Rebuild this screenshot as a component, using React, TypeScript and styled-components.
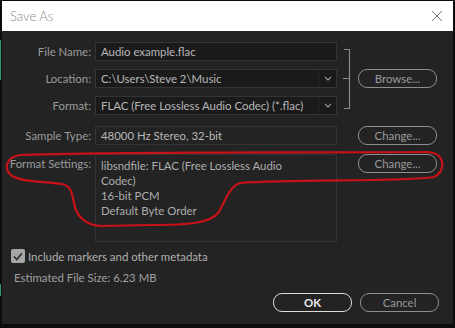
import styled, { createGlobalStyle } from 'styled-components';

const GlobalStyle = createGlobalStyle`
  html, body {
    margin: 0;
    padding: 0;
  }
  body {
    width: 455px;
    height: 328px;
    overflow: hidden;
    background: #0c0c0c;
    background-image: linear-gradient(
      to bottom,
      transparent 40px,
      #2f9a6c 40px,
      #2f9a6c 80px,
      transparent 80px,
      transparent 284px,
      #2f9a6c 284px,
      #2f9a6c 296px,
      transparent 296px
    );
    background-size: 1px 100%;
    background-repeat: no-repeat;
    font-family: "Lato", "Open Sans", sans-serif;
    position: relative;
  }
`;

const Window = styled.div`
  margin: 1px 2px 0 2px;
  width: 451px;
  display: flex;
  flex-direction: column;
`;

const TitleBar = styled.div`
  height: 30px;
  background: #ffffff;
  display: flex;
  align-items: center;
  justify-content: space-between;
  padding: 0 10px 0 8px;
`;

const Title = styled.span`
  font-family: "Lato", sans-serif;
  font-weight: 300;
  font-size: 13px;
  color: #8a8a8a;
`;

const CloseIcon = styled.svg`
  width: 12px;
  height: 12px;
`;

const Body = styled.div`
  height: 293px;
  background: #232323;
  display: flex;
  flex-direction: column;
  padding-top: 11px;
  box-sizing: border-box;
`;

const FieldGrid = styled.div<{ $rows: string; $gap: number; $top?: number }>`
  display: grid;
  grid-template-columns: 93px 242px 21px 79px;
  grid-template-rows: ${({ $rows }) => $rows};
  row-gap: ${({ $gap }) => $gap}px;
  margin-top: ${({ $top }) => $top ?? 0}px;
`;

const Label = styled.div`
  grid-column: 1;
  text-align: right;
  padding-right: 4px;
  font-size: 11.4px;
  color: #9b9b9b;
  line-height: 19px;
  white-space: nowrap;
  align-self: start;
`;

const Field = styled.div<{ $dark?: boolean }>`
  grid-column: 2;
  box-sizing: border-box;
  border: 1px solid #343434;
  background: ${({ $dark }) => ($dark ? '#1a1a1a' : '#232323')};
  display: flex;
  align-items: center;
  font-size: 11.4px;
  color: #b8b8b8;
  min-width: 0;
`;

const FieldText = styled.span`
  flex: 1;
  padding-left: 5px;
  white-space: nowrap;
  overflow: hidden;
`;

const MultiText = styled.div`
  padding: 3px 5px;
  font-size: 11.4px;
  line-height: 15px;
  color: #adadad;
`;

const ArrowCell = styled.div`
  width: 17px;
  align-self: stretch;
  border-left: 1px solid #262626;
  display: flex;
  align-items: center;
  justify-content: center;
`;

const Bracket = styled.svg`
  grid-column: 3;
  grid-row: 1 / span 3;
  width: 21px;
  height: 73px;
`;

const PillButton = styled.button<{ $bright?: boolean }>`
  grid-column: 4;
  box-sizing: border-box;
  height: 19px;
  width: 79px;
  border-radius: 9px;
  border: 1.5px solid ${({ $bright }) => ($bright ? '#dcdcdc' : '#8e8e8e')};
  background: transparent;
  color: ${({ $bright }) => ($bright ? '#ececec' : '#9a9a9a')};
  font-family: "Lato", sans-serif;
  font-size: 11.4px;
  font-weight: ${({ $bright }) => ($bright ? 700 : 400)};
  padding: 0;
  line-height: 15px;
  align-self: start;
`;

const CheckRow = styled.label`
  display: flex;
  align-items: center;
  gap: 3px;
  margin-top: 7px;
  padding-left: 9px;
  font-size: 11.4px;
  color: #b0b0b0;
  height: 14px;
`;

const CheckBox = styled.span`
  width: 14px;
  height: 14px;
  border-radius: 2px;
  background: #a6a6a6;
  display: flex;
  align-items: center;
  justify-content: center;
`;

const Estimate = styled.div`
  margin-top: 8px;
  padding-left: 12px;
  font-size: 11.4px;
  color: #a0a0a0;
  line-height: 14px;
`;

const Footer = styled.div`
  display: flex;
  justify-content: flex-end;
  gap: 8px;
  margin-top: 8px;
  padding-right: 14px;
`;

const Overlay = styled.svg`
  position: absolute;
  left: 0;
  top: 0;
  width: 455px;
  height: 328px;
  pointer-events: none;
`;

const Chevron = () => (
  <svg width="8" height="5" viewBox="0 0 8 5">
    <path d="M1 1 L4 4 L7 1" fill="none" stroke="#9a9a9a" strokeWidth="1.1" />
  </svg>
);

export default function App() {
  return (
    <>
      <GlobalStyle />
      <Window>
        <TitleBar>
          <Title>Save As</Title>
          <CloseIcon viewBox="0 0 12 12">
            <path d="M1 1 L11 11 M11 1 L1 11" stroke="#7a7a7a" strokeWidth="1" />
          </CloseIcon>
        </TitleBar>
        <Body>
          <FieldGrid $rows="19px 19px 19px" $gap={8}>
            <Label style={{ gridRow: 1 }}>File Name:</Label>
            <Field $dark style={{ gridRow: 1 }}>
              <FieldText>Audio example.flac</FieldText>
            </Field>
            <Label style={{ gridRow: 2 }}>Location:</Label>
            <Field $dark style={{ gridRow: 2 }}>
              <FieldText>C:\Users\Steve 2\Music</FieldText>
              <ArrowCell>
                <Chevron />
              </ArrowCell>
            </Field>
            <Label style={{ gridRow: 3 }}>Format:</Label>
            <Field $dark style={{ gridRow: 3 }}>
              <FieldText>FLAC (Free Lossless Audio Codec) (*.flac)</FieldText>
              <ArrowCell>
                <Chevron />
              </ArrowCell>
            </Field>
            <Bracket viewBox="0 0 21 73">
              <path
                d="M7 7.5 H12.5 V66.5 H7 M6 36.5 H12.5"
                fill="none"
                stroke="#8a8a8a"
                strokeWidth="1.2"
              />
            </Bracket>
            <PillButton style={{ gridRow: 2 }}>Browse...</PillButton>
          </FieldGrid>
          <FieldGrid $rows="19px 88px" $gap={9} $top={11}>
            <Label style={{ gridRow: 1 }}>Sample Type:</Label>
            <Field style={{ gridRow: 1 }}>
              <FieldText>48000 Hz Stereo, 32-bit</FieldText>
            </Field>
            <PillButton style={{ gridRow: 1 }}>Change...</PillButton>
            <Label style={{ gridRow: 2 }}>Format Settings:</Label>
            <Field style={{ gridRow: 2, alignItems: 'flex-start' }}>
              <MultiText>
                libsndfile: FLAC (Free Lossless Audio
                <br />
                Codec)
                <br />
                16-bit PCM
                <br />
                Default Byte Order
              </MultiText>
            </Field>
            <PillButton style={{ gridRow: 2 }}>Change...</PillButton>
          </FieldGrid>
          <CheckRow>
            <CheckBox>
              <svg width="10" height="9" viewBox="0 0 10 9">
                <path d="M1 4.5 L3.8 7.5 L9 1.2" fill="none" stroke="#2b2b2b" strokeWidth="1.6" />
              </svg>
            </CheckBox>
            Include markers and other metadata
          </CheckRow>
          <Estimate>Estimated File Size: 6.23 MB</Estimate>
          <Footer>
            <PillButton $bright>OK</PillButton>
            <PillButton>Cancel</PillButton>
          </Footer>
        </Body>
      </Window>
      <Overlay viewBox="0 0 455 328">
        <path
          d="M20 155 C150 151, 300 153, 428 152 C446 153, 446 172, 434 177 C400 182, 300 179, 240 183 C228 187, 224 205, 218 213 C210 223, 190 225, 150 225 L102 226 C86 226, 76 216, 74 203 C72 193, 71 186, 62 184 C45 181, 25 183, 12 176 C3 169, 6 157, 20 155 Z"
          fill="none"
          stroke="#c8121a"
          strokeWidth="2.2"
          strokeLinejoin="round"
        />
      </Overlay>
    </>
  );
}
